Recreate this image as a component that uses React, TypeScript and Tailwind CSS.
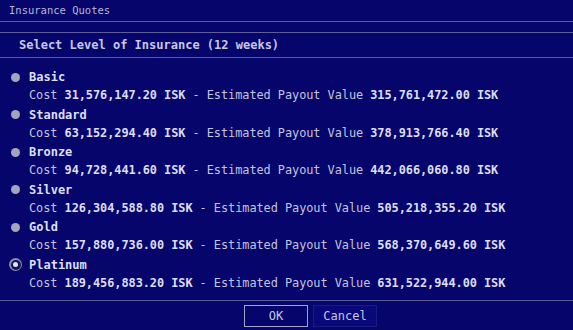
const quotes = [
  { level: 'Basic', cost: '31,576,147.20', payout: '315,761,472.00' },
  { level: 'Standard', cost: '63,152,294.40', payout: '378,913,766.40' },
  { level: 'Bronze', cost: '94,728,441.60', payout: '442,066,060.80' },
  { level: 'Silver', cost: '126,304,588.80', payout: '505,218,355.20' },
  { level: 'Gold', cost: '157,880,736.00', payout: '568,370,649.60' },
  { level: 'Platinum', cost: '189,456,883.20', payout: '631,522,944.00' },
];

const Radio = ({ checked }: { checked: boolean }) =>
  checked ? (
    <span className="w-[13px] h-[13px] rounded-full bg-[#8a8ab0] flex items-center justify-center">
      <span className="w-[10px] h-[10px] rounded-full bg-[#14145a] flex items-center justify-center">
        <span className="w-[5px] h-[5px] rounded-full bg-[#e4e4f4]" />
      </span>
    </span>
  ) : (
    <span className="w-[9px] h-[9px] rounded-full bg-[#a4a4bc]" />
  );

export default function App() {
  const selected = 'Platinum';

  return (
    <div
      className="w-[573px] h-[330px] bg-[#05056c] flex flex-col overflow-hidden text-[#c4c4dc]"
      style={{ fontFamily: '"DejaVu Sans Mono", monospace' }}
    >
      {/* title bar */}
      <div className="h-[22px] pl-[9px] flex items-center text-[10.5px] text-[#b8b8d4] border-b border-[#5c5c98]">
        Insurance Quotes
      </div>
      <div className="h-[11px] border-b border-[#5c5c98]" />

      {/* header */}
      <div className="h-[25px] pl-[19px] flex items-center text-[12px] font-bold text-[#c8c8e2] border-b border-[#5c5c98]">
        Select Level of Insurance (12 weeks)
      </div>

      {/* options */}
      <div className="pt-[10px] h-[243px] border-b border-[#5c5c98]">
        {quotes.map((q) => (
          <div key={q.level} className="h-[37.6px] flex">
            <div className="w-[29px] h-[18px] flex items-center justify-center pl-[6px] pr-[4px]">
              <Radio checked={q.level === selected} />
            </div>
            <div className="flex flex-col text-[12px] leading-[18px] whitespace-nowrap">
              <span className="font-bold text-[#dedef2]">{q.level}</span>
              <span className="text-[11.9px] tracking-[-0.05px]">
                Cost <b className="text-[#dedef2]">{q.cost} ISK</b> - Estimated Payout Value{' '}
                <b className="text-[#dedef2]">{q.payout} ISK</b>
              </span>
            </div>
          </div>
        ))}
      </div>

      {/* buttons */}
      <div className="pt-[4px] pl-[244px] flex gap-[5px] text-[12px]">
        <button className="w-[64px] h-[22px] border border-[#a4a4c4] text-[#c8c8e0] bg-[#05056c]">OK</button>
        <button className="w-[64px] h-[22px] border border-[#1c1c7c] text-[#c8c8e0] bg-[#08087a]">Cancel</button>
      </div>
    </div>
  );
}
